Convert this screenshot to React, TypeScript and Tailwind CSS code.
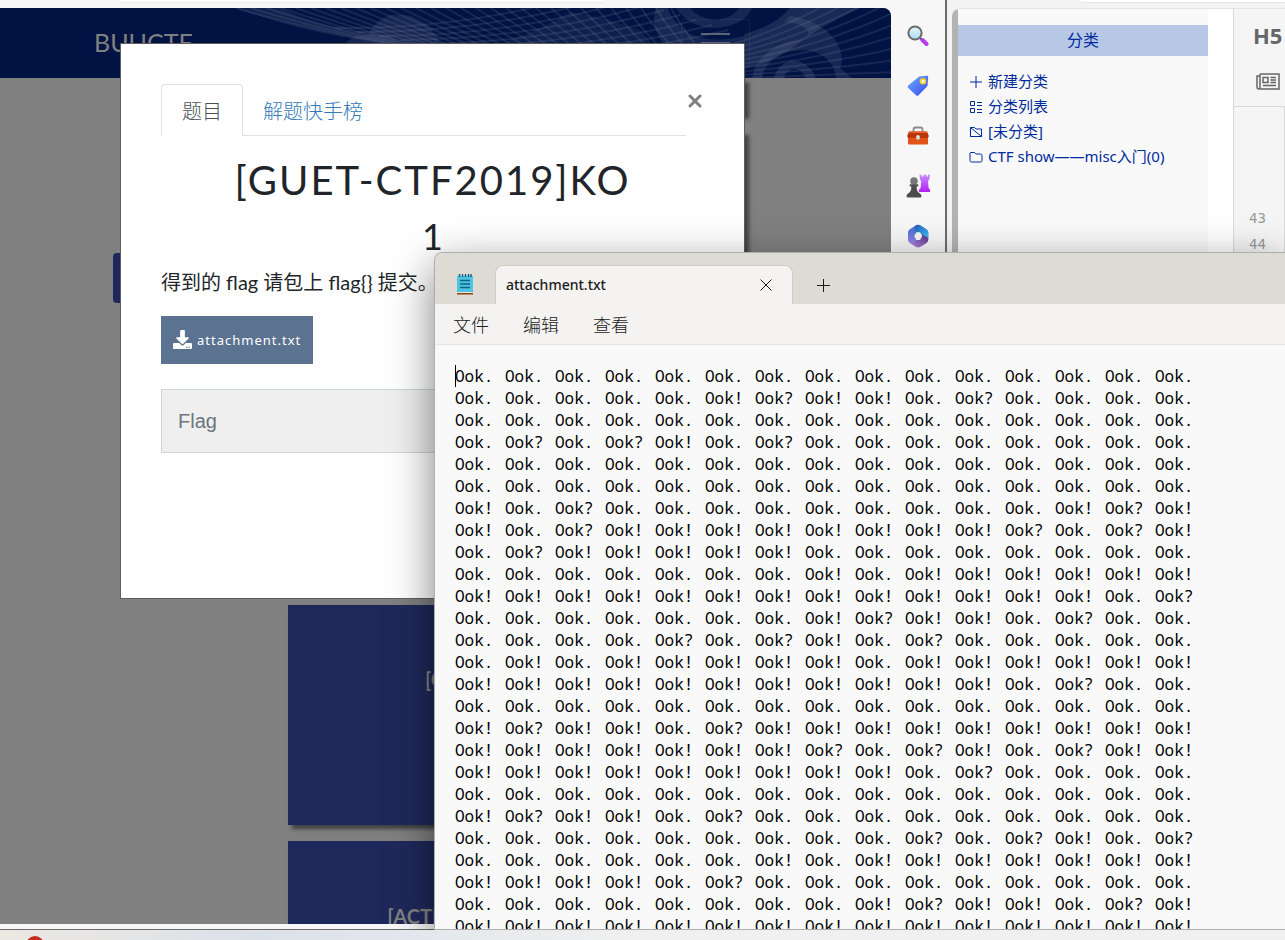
import React from "react";

const CJK = "font-['Noto_Sans','Noto_Sans_CJK_SC',sans-serif]";

/* Final punctuation mark of every "Ook" word, one string per line. */
const OOK_LINES = [
  "...............",
  ".....!?!!.?....",
  "...............",
  ".?.?!.?........",
  "...............",
  "...............",
  "!.?.........!?!",
  "!.?!!!!!!!!?.?!",
  ".?!!!!!........",
  ".......!.!!!!!!",
  "!!!!!!!!!!!!!.?",
  ".......!?!!.?..",
  "....?.?!.?.....",
  ".!.!!!!!.!!!!!!",
  "!!!!!!!!!!!.?..",
  "...............",
  "!?!!.?!!!!!!!!!",
  "!!!!!!!?.?!.?!!",
  "!!!!!!!!!.?....",
  "...............",
  "!?!!.?.........",
  ".........?.?!.?",
  "......!.!!!!!!!",
  "!!!!.?.........",
  "........!?!!.?!",
  "!!!!!!!!!!!!!!!",
];

const OOK_TEXT = OOK_LINES.map((line) =>
  line
    .split("")
    .map((mark) => "Ook" + mark)
    .join("\t")
).join("\n");

function NavPattern() {
  const fan = Array.from({ length: 30 }, (_, i) => i);
  return (
    <svg className="absolute inset-0 h-full w-full" viewBox="0 0 891 70" preserveAspectRatio="xMaxYMin slice" aria-hidden="true">
      <g fill="none" stroke="#8a93ad" strokeOpacity="0.16" strokeWidth="2">
        {fan.map((i) => (
          <path key={"a" + i} d={`M${236 + i * 15} 0 Q${310 + i * 13} ${22 + i / 3} ${400 + i * 12} ${38 + i * 2}`} />
        ))}
        {fan.slice(0, 9).map((i) => (
          <path key={"b" + i} d={`M${335 + i * 22} ${20 + i * 4} Q${470 + i * 20} ${22 + i * 3} ${600 + i * 16} ${-18 + i * 5}`} />
        ))}
      </g>
      <g fill="none" stroke="#8a93ad" strokeOpacity="0.16" strokeWidth="2">
        {fan.slice(0, 14).map((i) => (
          <path key={"c" + i} d={`M${700 + i * 3} ${44 + i * 3} Q${780 + i * 6} ${30 + i * 4} 895 ${-44 + i * 12}`} />
        ))}
      </g>
      <g fill="#8a93ad">
        <path d="M236 0 Q330 34 400 34 L390 28 Q320 20 280 0Z" fillOpacity="0.12" />
        <path d="M345 36 Q352 26 368 27 C378 8 392 6 400 7 C422 6 438 26 440 36Z" fillOpacity="0.15" />
        <path d="M500 36 Q540 22 570 4 Q600 8 640 22 L652 36Z" fillOpacity="0.1" />
        <path d="M656 0 Q650 20 664 36 H700 L744 50 V28 Q712 36 690 26 Q670 12 668 0Z" fillOpacity="0.16" />
        <path d="M676 0 Q690 20 716 20 Q744 18 752 0 H740 Q730 12 714 12 Q698 10 690 0Z" fillOpacity="0.16" />
        <path d="M744 26 Q775 18 790 0 H860 Q820 18 792 40 Q770 56 744 60Z" fillOpacity="0.18" />
        <path d="M790 8 C832 14 848 44 840 60 L852 70 H836 C834 48 812 38 790 44 C772 46 764 60 762 70 H752 C756 48 776 34 800 32 C816 26 808 16 784 14Z" fillOpacity="0.16" />
        <path d="M774 70 C780 48 806 46 816 70 H806 C800 58 788 58 784 70Z" fillOpacity="0.18" />
      </g>
    </svg>
  );
}

function SearchGlyph() {
  return (
    <svg width="22" height="22" viewBox="0 0 22 22" aria-hidden="true">
      <defs>
        <linearGradient id="lens" x1="0" y1="0" x2="0" y2="1">
          <stop offset="0" stopColor="#eaf8ff" />
          <stop offset="1" stopColor="#a5d8f5" />
        </linearGradient>
      </defs>
      <path d="M13 13l3 3" stroke="#555" strokeWidth="2.4" />
      <path d="M15.5 15l4 4" stroke="#b63df0" strokeWidth="4" strokeLinecap="round" />
      <circle cx="8" cy="8" r="6.6" fill="url(#lens)" stroke="#6a6a6a" strokeWidth="2" />
    </svg>
  );
}

function TagGlyph() {
  return (
    <svg width="22" height="22" viewBox="0 0 22 22" aria-hidden="true">
      <defs>
        <linearGradient id="tag" x1="0" y1="0" x2="1" y2="1">
          <stop offset="0" stopColor="#69b1ff" />
          <stop offset="1" stopColor="#3b46f2" />
        </linearGradient>
      </defs>
      <path d="M13 1.4 20 .8q1.200 0 1.200 1.200L20.600 10q0 .8-.6 1.400L11.500 20.200q-1.200 1.200-2.400 0L1.200 13q-1.200-1.200 0-2.400L11.600 2q.6-.5 1.400-.6z" fill="url(#tag)" />
      <circle cx="16" cy="6.200" r="2.400" fill="#fff" stroke="#f5d21c" strokeWidth="1.800" />
    </svg>
  );
}

function ToolboxGlyph() {
  return (
    <svg width="24" height="20" viewBox="0 0 24 20" aria-hidden="true">
      <path d="M7.500 6V3.500q0-2 2-2h5q2 0 2 2V6" fill="none" stroke="#8c8c8c" strokeWidth="1.800" />
      <rect x="2" y="10" width="20" height="8.500" rx="1" fill="#e0561a" />
      <path d="M3 5.500h18l1.800 4.500q0 2-2 2H3.200q-2 0-2-2z" fill="#b93608" />
      <path d="M3 5.500h18l.5 1.500h-19z" fill="#e8622c" />
      <rect x="10.200" y="9" width="3.600" height="4.600" rx="1.600" fill="#d5dfe2" />
    </svg>
  );
}

function ChessGlyph() {
  return (
    <svg width="24" height="24" viewBox="0 0 24 24" aria-hidden="true">
      <defs>
        <linearGradient id="rook" x1="0" y1="0" x2="0" y2="1">
          <stop offset="0" stopColor="#c58bff" />
          <stop offset="1" stopColor="#b01ff0" />
        </linearGradient>
      </defs>
      <path d="M13.500.8h2v1.600h2V.8h3v1.600h1.600V.8h1.900l-.8 5-1.200 1.200.6 7 1.400 1.400V18H13v-2.600l1.600-1.400.6-7L14 5.800z" fill="url(#rook)" />
      <circle cx="8" cy="7" r="3.800" fill="#777" />
      <path d="M3.500 11.200q0-1 1-1h7q1 0 1 1t-1 1.300h-.9q0 5 3 6.800 1.900 1 1.900 2.700 0 1.500-1.500 1.500H2q-1.500 0-1.500-1.500 0-1.700 1.900-2.700 3-1.800 3-6.800H4.500q-1-.3-1-1.300z" fill="#4c4c4c" />
    </svg>
  );
}

function OfficeGlyph() {
  return (
    <svg width="22" height="24" viewBox="0 0 22 24" aria-hidden="true">
      <defs>
        <linearGradient id="o1" x1="0" y1="0" x2="0" y2="1">
          <stop offset="0" stopColor="#3b6fd0" />
          <stop offset="1" stopColor="#a889ea" />
        </linearGradient>
        <linearGradient id="o2" x1="0" y1="0" x2="1" y2="1">
          <stop offset="0" stopColor="#255ab8" />
          <stop offset="1" stopColor="#3fc4f2" />
        </linearGradient>
        <linearGradient id="o3" x1="0" y1="1" x2="1" y2="0">
          <stop offset="0" stopColor="#b58be6" />
          <stop offset="1" stopColor="#5a3182" />
        </linearGradient>
      </defs>
      <path d="M8.800 1.400q2.300-1.300 4.600 0l6 3.800q1.900 1.200 1.900 3.400v7q0 2.200-1.900 3.400l-6 3.700q-2.300 1.300-4.600 0l-6-3.700Q1 17.800 1 15.600v-7q0-2.200 1.800-3.400z" fill="url(#o1)" />
      <path d="M8.800 1.400q2.300-1.300 4.600 0l6 3.800q1.900 1.200 1.900 3.400v6L14.500 11 8 9V3q0-1 .8-1.600z" fill="url(#o2)" />
      <path d="M14.500 10.500 20 13q1.300.8 1.300 2.500 0 2.200-1.900 3.500l-6 3.700q-2.300 1.300-4.600 0L3.500 19.400Q7 19.500 9 16z" fill="url(#o3)" />
      <path d="M9.400 8.200h3.600l2.200 3.900-2.200 3.900H9.400l-2.200-3.900z" fill="#f7f7f7" />
    </svg>
  );
}

const edgeTools = [
  { label: "搜索", icon: <SearchGlyph /> },
  { label: "购物", icon: <TagGlyph /> },
  { label: "工具", icon: <ToolboxGlyph /> },
  { label: "游戏", icon: <ChessGlyph /> },
  { label: "Microsoft 365", icon: <OfficeGlyph /> },
];

function ChallengeModal() {
  return (
    <section role="dialog" aria-labelledby="challenge-title" className="absolute left-[120px] top-[35px] h-[556px] w-[625px] border border-[#5e5e5e] bg-white px-10 pt-10 text-[#212529]">
      <button aria-label="关闭" className="absolute right-[41px] top-[49px] flex size-4 items-center justify-center text-[#7f7f7f]">
        <svg width="14" height="14" viewBox="0 0 14 14" aria-hidden="true">
          <path d="M2 2l10 10M12 2L2 12" stroke="currentColor" strokeWidth="3" strokeLinecap="round" />
        </svg>
      </button>
      <nav className="mr-[18px] flex border-b border-[#dee2e6] font-['Lato','Noto_Sans_CJK_SC',sans-serif] text-[20px] leading-[30px] font-light">
        <a href="#challenge" className="-mb-px rounded-t border border-b-0 border-[#dee2e6] bg-white px-5 pt-[11px] pb-[10px] text-[#495057]">题目</a>
        <a href="#solves" className="px-5 pt-3 pb-[9px] text-[#337ab7]">解题快手榜</a>
      </nav>
      <h1 id="challenge-title" className="mt-5 text-center font-['Lato',sans-serif] text-[40px] leading-[48px] font-normal tracking-[2px]">[GUET-CTF2019]KO</h1>
      <p className="mt-2 text-center font-['Lato',sans-serif] text-[36px] leading-[48px]">1</p>
      <p className="mt-[7px] font-['Lato','Noto_Sans_CJK_SC',sans-serif] text-[20px] leading-[30px] font-normal">得到的 flag 请包上 flag{"{}"} 提交。</p>
      <button className="mt-[19px] flex h-12 items-center gap-[5px] bg-[#5b7290] px-3 pt-[2px] font-['Noto_Sans',sans-serif] text-[13px] tracking-[1px] text-white">
        <svg width="19" height="19" viewBox="0 0 512 512" fill="currentColor" className="mb-1" aria-hidden="true">
          <path d="M216 0h80c13.300 0 24 10.700 24 24v168h87.700c17.800 0 26.700 21.500 14.100 34.100L269.700 378.300c-7.500 7.500-19.800 7.500-27.300 0L90.100 226.100c-12.600-12.600-3.700-34.100 14.100-34.100H192V24c0-13.300 10.700-24 24-24zm296 376v112c0 13.300-10.700 24-24 24H24c-13.300 0-24-10.700-24-24V376c0-13.300 10.700-24 24-24h146.700l49 49c20.100 20.100 52.500 20.100 72.600 0l49-49H488c13.300 0 24 10.700 24 24zm-124 88c0-11-9-20-20-20s-20 9-20 20 9 20 20 20 20-9 20-20zm64 0c0-11-9-20-20-20s-20 9-20 20 9 20 20 20 20-9 20-20z" />
        </svg>
        attachment.txt
      </button>
      <input aria-label="Flag" placeholder="Flag" className="mt-[25px] h-16 w-full border border-[#ced4da] bg-[#efefef] px-4 font-['Liberation_Sans',sans-serif] text-[20px] placeholder:text-[#6c757d]" />
    </section>
  );
}

function CtfBrowser() {
  return (
    <section className="flex w-[947px] shrink-0 flex-col border-r-2 border-b border-[#6b6b6b] bg-[#f7f7f7]">
      <div className="h-2 shrink-0 pl-[118px]">
        <div className="h-[2px] w-[485px] rounded-b-lg bg-white shadow-[0_1px_1px_#ececec]" />
      </div>
      <div className="mb-[5px] flex min-h-0 flex-1">
        <div className="relative flex w-[891px] flex-col overflow-hidden rounded-tr-lg bg-[#808080] font-['Lato',sans-serif]">
          <header className="relative flex h-[70px] shrink-0 items-start justify-between bg-[#001342] pr-[141px] pl-[94px]">
            <NavPattern />
            <a href="#home" className="relative pt-4 text-[25px] leading-9 text-[#808080]">BUUCTF</a>
            <button aria-label="菜单" className="relative mt-[11px] flex h-[50px] w-[69px] flex-col items-center gap-[7px] rounded border border-white/5 pt-[13px]">
              <span className="h-[2px] w-[29px] bg-[#5c657b]" />
              <span className="h-[2px] w-[29px] bg-[#5c657b]" />
              <span className="h-[2px] w-[29px] bg-[#5c657b]" />
            </button>
          </header>
          <main className="flex min-h-0 flex-1">
            <aside className="w-[288px] shrink-0 pt-[175px] pl-[113px]">
              <div className="h-[50px] w-[160px] rounded bg-[#1f285a]" />
            </aside>
            <div className="flex w-[457px] flex-col gap-4 text-center text-[20px] font-bold text-[#808080]">
              <div className="h-[37px] shrink-0 bg-[#001342] shadow-[4px_4px_4px_rgba(0,0,0,0.5)]" />
              <div className="h-[458px] shrink-0 bg-[#001342] shadow-[4px_4px_4px_rgba(0,0,0,0.5)]" />
              <div className="h-[220px] shrink-0 bg-[#1f285a] pt-[58px] leading-8 shadow-[4px_4px_4px_rgba(0,0,0,0.5)]">[GUET-CTF2019]KO</div>
              <div className="h-[220px] shrink-0 bg-[#1f285a] pt-[59px] leading-8 shadow-[4px_4px_4px_rgba(0,0,0,0.5)]">[ACTF新生赛2020]frequency</div>
            </div>
          </main>
          <ChallengeModal />
        </div>
        <nav aria-label="侧边栏" className="flex flex-1 flex-col items-center gap-[26px] pt-4">
          {edgeTools.map((tool) => (
            <button key={tool.label} aria-label={tool.label} className="flex size-6 items-center justify-center">
              {tool.icon}
            </button>
          ))}
        </nav>
      </div>
    </section>
  );
}

const iconProps = { width: 14, height: 14, viewBox: "0 0 14 14", fill: "none", stroke: "currentColor", strokeWidth: 1 } as const;

const categories = [
  { label: "新建分类", icon: <svg {...iconProps}><path d="M7 1v12M1 7h12" /></svg> },
  {
    label: "分类列表",
    icon: <svg {...iconProps}><path d="M1.500 1.500h4v4h-4zM1.500 8.500h4v4h-4zM8 2.500h5M8 5.500h5M8 9.500h5M8 12.500h5" /></svg>,
  },
  { label: "[未分类]", icon: <svg {...iconProps}><path d="M1.500 11.500v-9l11 9zM5.500 2.500l1.500 1.500h5.500v7.500M1.500 2.500h4M1.500 11.500h11" /></svg> },
  { label: "CTF show——misc入门(0)", icon: <svg {...iconProps}><path d="M1 3.500q0-1 1-1h3.500L7 4h4.500q1.500 0 1.500 1.500v5q0 1.500-1.500 1.500h-9Q1 12 1 10.500z" /></svg> },
];

function BlogEditorBrowser() {
  return (
    <section className={`flex min-w-0 flex-1 flex-col overflow-hidden bg-[#f3f3f3] pl-[5px] ${CJK}`}>
      <div className="h-2 shrink-0 pl-[128px]">
        <div className="h-[2px] rounded-bl-lg bg-white shadow-[0_1px_1px_#e6e6e6]" />
      </div>
      <div className="flex min-h-0 flex-1 overflow-hidden rounded-tl-lg border-t border-[#e4e4e4] bg-white">
        <div className="w-[6px] shrink-0 bg-[#b3b3b3]" />
        <aside className="w-[250px] shrink-0 bg-[#f9f9f9] pt-4 text-[#002b9c]">
          <h2 className="bg-[#b6c8e6] text-center text-[16px] leading-[31px]">分类</h2>
          <ul className="mt-[13px] pl-[11px] text-[15px] leading-[25px]">
            {categories.map((c) => (
              <li key={c.label}>
                <a href="#category" className="flex items-center gap-[5px] whitespace-nowrap">
                  {c.icon}
                  {c.label}
                </a>
              </li>
            ))}
          </ul>
        </aside>
        <div className="ml-[25px] flex min-w-0 flex-1 flex-col border-l border-[#d8d8d8] bg-[#f5f5f5] text-[#666]">
          <div className="flex h-[98px] flex-col gap-6 border-b border-[#d8d8d8] pt-3 pl-[19px]">
            <button className="text-left text-[22px] leading-7 font-bold">H5</button>
            <button aria-label="摘要" className="pl-[3px]">
              <svg width="24" height="17" viewBox="0 0 24 17" fill="none" stroke="currentColor" strokeWidth="1.500" aria-hidden="true">
                <path d="M4 1h19v15H3q-2 0-2-2V3h3M4 1v13q0 1.500-1 2M7 4.500h5v5H7zM14.500 4.500H20M14.500 7H20M14.500 9.500H20M7 12.500h13" />
              </svg>
            </button>
          </div>
          <div className="flex-1 border-r border-[#d8d8d8] pt-[98px] pl-[15px] font-['DejaVu_Sans_Mono',monospace] text-[14px] leading-[26px] text-[#999]">
            <div>43</div>
            <div>44</div>
          </div>
        </div>
      </div>
    </section>
  );
}

function Notepad() {
  return (
    <section className="absolute top-[252px] right-0 bottom-[10px] left-[434px] flex flex-col overflow-hidden rounded-tl-lg border border-r-0 border-[#adadad] bg-[#f9f9f9] text-[#1b1b1b] shadow-[0_14px_44px_rgba(0,0,0,0.5)]">
      <header className="flex h-[51px] shrink-0 items-end bg-[#dedad4]">
        <div className="flex w-[60px] justify-center self-center pt-3">
          <svg width="16" height="21" viewBox="0 0 16 21" aria-hidden="true">
            <rect x="0" y="17" width="16" height="3.500" fill="#8a4312" />
            <rect x="0" y="18" width="16" height="1" fill="#e9e2da" />
            <rect x="0" y="2" width="16" height="16" rx="1" fill="#4fc3e2" />
            <path d="M2.500 0v3M5.500 0v3M8.500 0v3M11.500 0v3M14 0v3" stroke="#0f5c7c" strokeWidth="1.400" />
            <path d="M3 6.500h10M3 10h10M3 13.500h10" stroke="#0c6688" strokeWidth="1.600" />
          </svg>
        </div>
        <div className="flex h-[39px] w-[298px] items-center justify-between rounded-t-lg border border-b-0 border-[#cfcbc6] bg-[#f4f3f1] pr-5 pl-[10px]">
          <span className="font-['Noto_Sans',sans-serif] text-[14px] leading-5 font-medium">attachment.txt</span>
          <button aria-label="关闭标签页">
            <svg width="12" height="12" viewBox="0 0 12 12" stroke="currentColor" aria-hidden="true">
              <path d="M.5 .5l11 11M11.500 .5L.5 11.500" />
            </svg>
          </button>
        </div>
        <button aria-label="新建标签页" className="flex h-[38px] w-[60px] items-center justify-center">
          <svg width="13" height="13" viewBox="0 0 13 13" stroke="currentColor" aria-hidden="true">
            <path d="M6.500 0v13M0 6.500h13" />
          </svg>
        </button>
      </header>
      <nav className={`flex h-[41px] shrink-0 items-center gap-[34px] border-b border-[#e5e4e2] bg-[#f4f3f1] pt-[2px] pl-[18px] text-[18px] font-light ${CJK}`}>
        <button>文件</button>
        <button>编辑</button>
        <button>查看</button>
      </nav>
      <div className="relative flex min-h-0 flex-1">
        <textarea
          aria-label="attachment.txt"
          readOnly
          wrap="off"
          value={OOK_TEXT}
          className="block w-full resize-none overflow-hidden bg-transparent pt-5 pl-5 font-['Noto_Sans_Mono','DejaVu_Sans_Mono',monospace] text-[16px] leading-[22px] whitespace-pre text-black outline-none [tab-size:50px]"
        />
        <div className="absolute top-5 left-5 h-[22px] w-px bg-black" />
      </div>
    </section>
  );
}

export default function App() {
  return (
    <div className="relative flex h-screen w-full flex-col overflow-hidden">
      <div className="flex min-h-0 flex-1">
        <CtfBrowser />
        <BlogEditorBrowser />
      </div>
      <footer className="relative z-10 h-[10px] shrink-0 overflow-hidden bg-linear-to-r from-[#ece8e2] via-[#dbe1e8] via-20% to-[#f0f0f0] to-50% pt-[6px] pl-[26px]">
        <div className="size-[18px] rounded-full bg-[#c4291c]" />
      </footer>
      <Notepad />
    </div>
  );
}
